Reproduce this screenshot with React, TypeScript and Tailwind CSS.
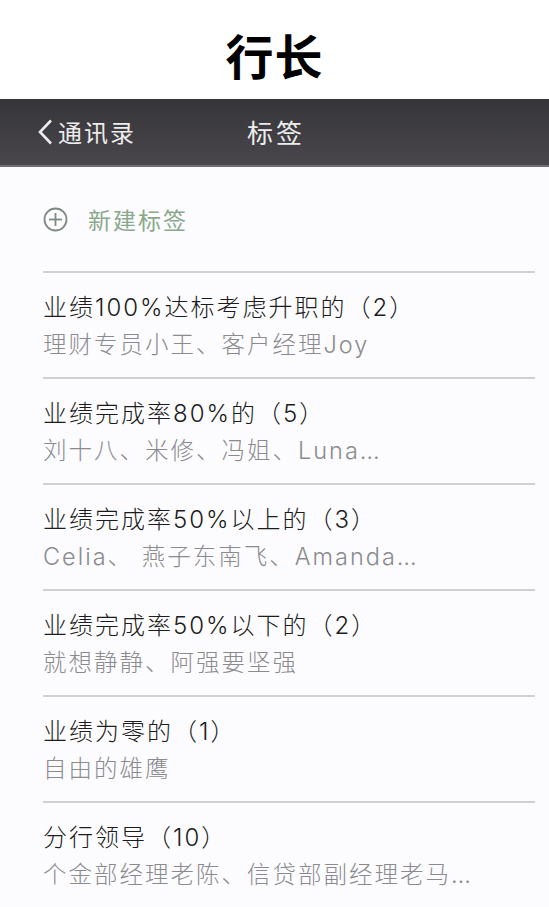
import React from 'react'

type Tag = {
  title: string
  members: string
}

const TAGS: Tag[] = [
  { title: '业绩100%达标考虑升职的（2）', members: '理财专员小王、客户经理Joy' },
  { title: '业绩完成率80%的（5）', members: '刘十八、米修、冯姐、Luna…' },
  { title: '业绩完成率50%以上的（3）', members: 'Celia、 燕子东南飞、Amanda…' },
  { title: '业绩完成率50%以下的（2）', members: '就想静静、阿强要坚强' },
  { title: '业绩为零的（1）', members: '自由的雄鹰' },
  { title: '分行领导（10）', members: '个金部经理老陈、信贷部副经理老马…' },
]

export default function App() {
  return (
    <div className="w-[549px] h-[907px] overflow-hidden bg-[#fcfcfe] font-['Inter','Noto_Sans_CJK_SC',sans-serif]">
      {/* caption */}
      <div className="h-[99px] bg-white flex items-center justify-center pt-[8px] font-['Noto_Sans_CJK_SC',sans-serif]">
        <h1 className="text-[48px] font-bold text-black leading-none tracking-[1px]">行长</h1>
      </div>

      {/* nav bar */}
      <div className="h-[68px] grid grid-cols-[1fr_auto_1fr] items-center bg-gradient-to-b from-[#363539] to-[#49474c] border-b-2 border-[#6e6d71] font-['Noto_Sans_CJK_SC',sans-serif] text-[#ececec]">
        <div className="flex items-center pl-[37px]">
          <svg width="16" height="26" viewBox="0 0 16 26" fill="none">
            <polyline points="14,1.5 3,13 14,24.5" stroke="#ececec" strokeWidth="2.6" strokeLinejoin="miter" />
          </svg>
          <span className="ml-[5px] text-[24px] tracking-[2px] leading-none">通讯录</span>
        </div>
        <span className="text-[26px] tracking-[3px] leading-none pl-[3px]">标签</span>
        <div />
      </div>

      <div className="pl-[43px] pr-[14px]">
        {/* new tag */}
        <div className="h-[104px] flex items-center">
          <svg width="25" height="25" viewBox="0 0 25 25" fill="none">
            <circle cx="12.5" cy="12.5" r="11" stroke="#7f8a80" strokeWidth="1.8" />
            <line x1="12.5" y1="6" x2="12.5" y2="19" stroke="#7f8a80" strokeWidth="1.8" />
            <line x1="6" y1="12.5" x2="19" y2="12.5" stroke="#7f8a80" strokeWidth="1.8" />
          </svg>
          <span className="ml-[20px] text-[23px] tracking-[2px] text-[#8aa88b] font-['Noto_Sans_CJK_SC',sans-serif]">新建标签</span>
        </div>

        {TAGS.map(t => (
          <div key={t.title} className="h-[106px] border-t-2 border-[#d0d0d3] pt-[19px]">
            <div className="text-[24px] tracking-[2px] font-light leading-[32px] text-[#1c1c1c] whitespace-nowrap">{t.title}</div>
            <div className="mt-[5px] text-[23.5px] tracking-[2px] font-light leading-[32px] text-[#8b8b8f] whitespace-nowrap">{t.members}</div>
          </div>
        ))}
      </div>
    </div>
  )
}
